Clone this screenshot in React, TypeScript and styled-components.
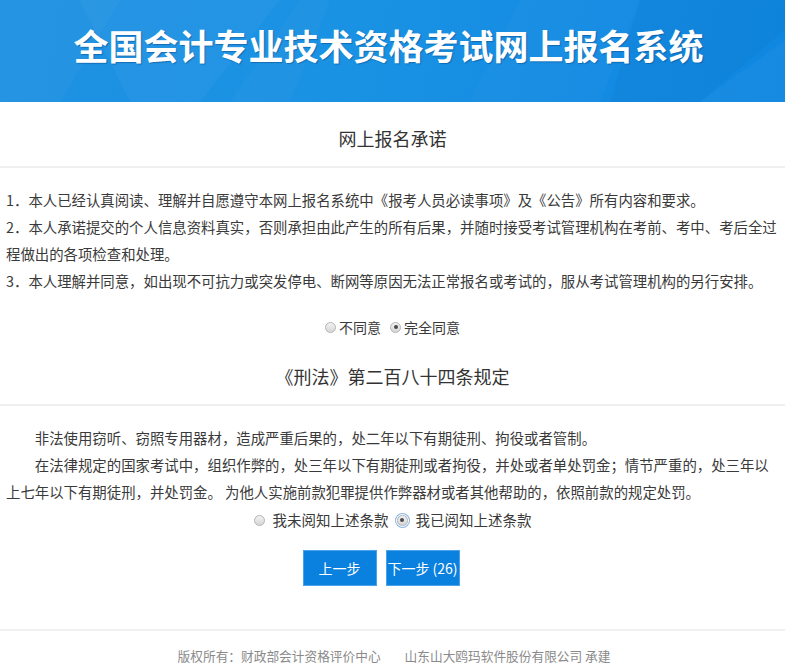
import React, { useState } from "react";
import styled, { createGlobalStyle, css } from "styled-components";

const GlobalStyle = createGlobalStyle`
  html, body {
    margin: 0;
    padding: 0;
    background: #ffffff;
  }
  body {
    font-family: "Noto Sans CJK SC", "Microsoft YaHei", "Noto Sans", sans-serif;
    color: #3a3a3a;
  }
  * { box-sizing: border-box; }
`;

const Page = styled.div`
  width: 785px;
  display: flex;
  flex-direction: column;
`;

const Header = styled.header`
  position: relative;
  height: 102px;
  overflow: hidden;
  background: linear-gradient(100deg, #1e91e2 0%, #1a92e3 45%, #148be3 75%, #0f87e0 100%);
  display: flex;
  justify-content: center;
  padding-top: 22px;
`;

const HeaderArt = styled.svg`
  position: absolute;
  inset: 0;
  width: 100%;
  height: 100%;
`;

const Title = styled.h1`
  position: relative;
  margin: 0 8px 0 0;
  font-size: 35px;
  line-height: 46px;
  font-weight: 700;
  color: #ffffff;
  letter-spacing: 0;
  text-shadow: 1px 1px 1px rgba(0, 40, 90, 0.35);
`;

const SectionHead = styled.div<{ $top: number }>`
  padding-top: ${(p) => p.$top}px;
  padding-bottom: 16px;
  border-bottom: 2px solid #f0f0f0;
  text-align: center;
  font-size: 18px;
  line-height: 24px;
  color: #333;
`;

const Body = styled.div<{ $right: number }>`
  padding: 18px ${(p) => p.$right}px 0 6px;
  font-size: 14.4px;
  line-height: 27px;
  color: #3a3a3a;
`;

const Para = styled.p<{ $indent?: boolean }>`
  margin: 0;
  text-indent: ${(p) => (p.$indent ? "2em" : "0")};
`;

const RadioRow = styled.div<{ $gap: number; $top: number }>`
  display: flex;
  justify-content: center;
  align-items: center;
  gap: ${(p) => p.$gap}px;
  margin-top: ${(p) => p.$top}px;
  height: 20px;
  font-size: 14px;
  color: #3a3a3a;
`;

const Label = styled.label<{ $gap: number; $size: number }>`
  display: inline-flex;
  align-items: center;
  gap: ${(p) => p.$gap}px;
  cursor: pointer;
  font-size: ${(p) => p.$size}px;
  line-height: 20px;
`;

const RadioDot = styled.span<{ $checked: boolean; $focus?: boolean }>`
  position: relative;
  width: 11px;
  height: 11px;
  border-radius: 50%;
  border: 1px solid #b4b4b4;
  background: linear-gradient(180deg, #f2f2f2, #d6d6d6);
  flex: none;
  ${(p) =>
    p.$checked &&
    css`
      &::after {
        content: "";
        position: absolute;
        left: 2.5px;
        top: 2.5px;
        width: 4px;
        height: 4px;
        border-radius: 50%;
        background: #4a4a4a;
      }
    `}
  ${(p) =>
    p.$focus &&
    css`
      box-shadow: 0 0 0 1px #ffffff, 0 0 0 2px #86b3e6;
    `}
`;

const HiddenInput = styled.input`
  display: none;
`;

const ButtonRow = styled.div`
  display: flex;
  justify-content: center;
  gap: 9px;
  margin-top: 20px;
  padding-right: 23px;
`;

const Button = styled.button`
  width: 74px;
  height: 36px;
  border: 1px solid #4aa2ea;
  background: #0a80df;
  color: #ffffff;
  font-family: "Noto Sans CJK SC", "Microsoft YaHei", sans-serif;
  font-size: 14px;
  padding: 0;
  cursor: pointer;
  white-space: nowrap;
`;

const Footer = styled.footer`
  margin-top: 43px;
  border-top: 2px solid #f0f0f0;
  padding-top: 16px;
  display: flex;
  justify-content: center;
  gap: 24px;
  font-size: 12.7px;
  line-height: 18px;
  color: #8a8a8a;
  padding-left: 3px;
`;

function Radio({
  name,
  checked,
  focus,
  onChange,
  children,
  gap,
  size,
}: {
  name: string;
  checked: boolean;
  focus?: boolean;
  onChange: () => void;
  children: React.ReactNode;
  gap: number;
  size: number;
}) {
  return (
    <Label $gap={gap} $size={size} onClick={onChange}>
      <HiddenInput type="radio" name={name} checked={checked} readOnly />
      <RadioDot $checked={checked} $focus={focus} />
      <span>{children}</span>
    </Label>
  );
}

export default function App() {
  const [agree, setAgree] = useState("yes");
  const [read, setRead] = useState("yes");
  return (
    <>
      <GlobalStyle />
      <Page>
        <Header>
          <HeaderArt viewBox="0 0 785 102" preserveAspectRatio="none">
            <polygon points="0,0 120,0 60,102 0,102" fill="#ffffff" opacity="0.03" />
            <polygon points="80,0 280,0 200,102 130,102" fill="#ffffff" opacity="0.035" />
            <polygon points="230,102 300,0 330,0 290,102" fill="#ffffff" opacity="0.025" />
            <polygon points="520,0 640,0 600,102 470,102" fill="#ffffff" opacity="0.02" />
            <polygon points="640,0 785,0 785,30 700,102 610,102" fill="#000000" opacity="0.025" />
            <polygon points="700,102 785,40 785,102" fill="#ffffff" opacity="0.03" />
          </HeaderArt>
          <Title>全国会计专业技术资格考试网上报名系统</Title>
        </Header>

        <SectionHead $top={24}>网上报名承诺</SectionHead>
        <Body $right={0}>
          <Para>1．本人已经认真阅读、理解并自愿遵守本网上报名系统中《报考人员必读事项》及《公告》所有内容和要求。</Para>
          <Para>2．本人承诺提交的个人信息资料真实，否则承担由此产生的所有后果，并随时接受考试管理机构在考前、考中、考后全过程做出的各项检查和处理。</Para>
          <Para>3．本人理解并同意，如出现不可抗力或突发停电、断网等原因无法正常报名或考试的，服从考试管理机构的另行安排。</Para>
        </Body>
        <RadioRow $gap={9} $top={23}>
          <Radio name="agree" gap={3} size={14} checked={agree === "no"} onChange={() => setAgree("no")}>
            不同意
          </Radio>
          <Radio name="agree" gap={3} size={14} checked={agree === "yes"} onChange={() => setAgree("yes")}>
            完全同意
          </Radio>
        </RadioRow>

        <SectionHead $top={27}>《刑法》第二百八十四条规定</SectionHead>
        <Body $right={10}>
          <Para $indent>非法使用窃听、窃照专用器材，造成严重后果的，处二年以下有期徒刑、拘役或者管制。</Para>
          <Para $indent>在法律规定的国家考试中，组织作弊的，处三年以下有期徒刑或者拘役，并处或者单处罚金；情节严重的，处三年以上七年以下有期徒刑，并处罚金。 为他人实施前款犯罪提供作弊器材或者其他帮助的，依照前款的规定处罚。</Para>
        </Body>
        <RadioRow $gap={8} $top={5}>
          <Radio name="read" gap={8} size={14.5} checked={read === "no"} onChange={() => setRead("no")}>
            我未阅知上述条款
          </Radio>
          <Radio name="read" gap={8} size={14.5} checked={read === "yes"} focus onChange={() => setRead("yes")}>
            我已阅知上述条款
          </Radio>
        </RadioRow>

        <ButtonRow>
          <Button type="button">上一步</Button>
          <Button type="button">下一步 (26)</Button>
        </ButtonRow>

        <Footer>
          <span>版权所有：财政部会计资格评价中心</span>
          <span>山东山大鸥玛软件股份有限公司 承建</span>
        </Footer>
      </Page>
    </>
  );
}
